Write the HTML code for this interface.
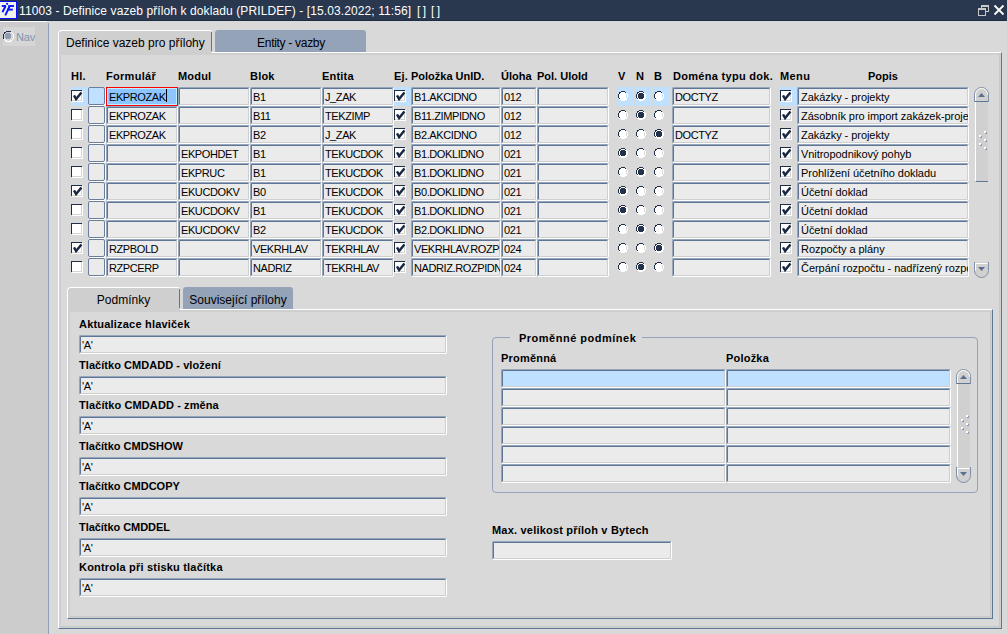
<!DOCTYPE html><html><head><meta charset="utf-8"><style>
*{margin:0;padding:0;box-sizing:border-box}
html,body{width:1007px;height:634px;overflow:hidden;background:#d9d9d9;font-family:"Liberation Sans",sans-serif;color:#000}
.ab{position:absolute}
.t{position:absolute;white-space:nowrap;font-size:11px;line-height:13px}
.b{font-weight:bold;letter-spacing:0.2px}
.f{position:absolute;height:19px;background:#ebebeb;border-radius:2px;border-top:1px solid #95a5ba;border-left:1px solid #95a5ba;border-right:1px solid #fff;border-bottom:1px solid #fff;overflow:hidden;white-space:nowrap;font-size:11px;line-height:13px}
.f::before{content:"";position:absolute;left:0;top:0;right:0;bottom:0;border-top:1px solid #5f7595;border-left:1px solid #5f7595;border-right:1px solid #cfcfcf;border-bottom:1px solid #cfcfcf;border-radius:1px}
.f span{position:absolute;left:3px;top:3px}
.hl{position:absolute;background:#bfe0ff;height:19px}
.cb{position:absolute;width:11px;height:11px;background:#fff;border-top:1px solid #1f2d45;border-left:1px solid #1f2d45;box-shadow:inset -1px -1px 0 #d4d4d4,1px 1px 0 #fff}
.cb svg{left:-1px!important;top:-1px!important}
.cb svg{position:absolute;left:0;top:0}
.rd{position:absolute;width:12px;height:12px}
</style></head><body>
<div class="ab" style="left:0;top:0;width:1007px;height:21px;background:#29384f"></div>
<div class="ab" style="left:0;top:20px;width:1007px;height:1px;background:#1f2c40"></div>
<div class="ab" style="left:0;top:21px;width:47px;height:1px;background:#fff"></div>
<div class="ab" style="left:-1px;top:1px;width:18px;height:18px;background:#f2f2ee;border:1px solid #0a10f0"></div>
<svg class="ab" style="left:0;top:0" width="17" height="20"><g stroke="#0814ff" stroke-width="1.9" fill="none" stroke-linecap="butt"><path d="M1.8 6 H6"/><path d="M5.6 6 L2.4 12.3"/><path d="M8.3 6 H14"/><path d="M7.4 9.6 H12.8"/><path d="M9.7 6 L5.3 15.4"/></g><circle cx="7.1" cy="3.8" r="1.1" fill="#0814ff"/></svg>
<div class="t" style="left:19px;top:4px;font-size:12px;line-height:14px;color:#fff;letter-spacing:0.1px">11003 - Definice vazeb příloh k dokladu (PRILDEF) - [15.03.2022; 11:56]</div>
<div class="t" style="left:417px;top:4px;font-size:12px;line-height:14px;color:#fff;letter-spacing:-0.4px">[ ]</div>
<div class="t" style="left:431px;top:4px;font-size:12px;line-height:14px;color:#fff;letter-spacing:-0.4px">[ ]</div>
<svg class="ab" style="left:976px;top:3px" width="14" height="14"><g fill="none" stroke="#c8c8c8" stroke-width="1"><rect x="5.5" y="2.5" width="7" height="6"/><line x1="5" y1="3" x2="13" y2="3" stroke-width="2"/><rect x="2.5" y="5.5" width="7" height="7" fill="#283850"/><line x1="2" y1="6" x2="10" y2="6" stroke-width="2"/></g></svg>
<svg class="ab" style="left:993px;top:4px" width="12" height="12"><g stroke="#fff" stroke-width="1.8"><line x1="1.5" y1="1.5" x2="10.5" y2="10.5"/><line x1="10.5" y1="1.5" x2="1.5" y2="10.5"/></g></svg>
<div class="ab" style="left:0;top:22px;width:48px;height:612px;background:#cccccc"></div>
<div class="ab" style="left:48px;top:23px;width:1px;height:611px;background:#8e9fb6"></div>
<div class="ab" style="left:3px;top:27px;width:32px;height:19px;background:#d6d6d6"></div>
<div class="t" style="left:16px;top:31px;color:#7f93b3;letter-spacing:-0.2px">Nav</div>
<div class="ab" style="left:58px;top:52px;width:944px;height:577px;border-top:1px solid #fff;border-left:1px solid #fff;border-right:1px solid #5f7595;border-bottom:1px solid #5f7595;background:#cfcfcf"></div>
<div class="ab" style="left:61px;top:55px;width:939px;height:572px;background:#d9d9d9;box-shadow:inset -1px -1px 0 #c8c8c8"></div>
<div class="ab" style="left:58px;top:30px;width:154px;height:25px;background:#cfcfcf;border-top:1px solid #fff;border-left:1px solid #fff;border-top-left-radius:4px;border-top-right-radius:2px"></div>
<div class="ab" style="left:211px;top:32px;width:1px;height:19px;background:#5f7595"></div>
<div class="ab" style="left:59px;top:52px;width:152px;height:3px;background:#cfcfcf"></div>
<div class="t" style="left:66px;top:36px;font-size:12px;line-height:14px">Definice vazeb pro přílohy</div>
<div class="ab" style="left:215px;top:30px;width:151px;height:22px;background:#94a3b8;border-top-left-radius:3px;border-top-right-radius:3px"></div>
<div class="t" style="left:215px;width:152px;text-align:center;top:36px;font-size:12px;line-height:14px;letter-spacing:-0.3px">Entity - vazby</div>
<div class="t b" style="left:71px;top:70px;letter-spacing:0.2px">Hl.</div>
<div class="t b" style="left:106px;top:70px;letter-spacing:0.3px">Formulář</div>
<div class="t b" style="left:178px;top:70px;letter-spacing:0.2px">Modul</div>
<div class="t b" style="left:250px;top:70px;letter-spacing:0.2px">Blok</div>
<div class="t b" style="left:322px;top:70px;letter-spacing:0.2px">Entita</div>
<div class="t b" style="left:394px;top:70px;letter-spacing:0.2px">Ej.</div>
<div class="t b" style="left:411px;top:70px;letter-spacing:0px">Položka UnID.</div>
<div class="t b" style="left:501px;top:70px;letter-spacing:0px">Úloha</div>
<div class="t b" style="left:537px;top:70px;letter-spacing:0px">Pol. UloId</div>
<div class="t b" style="left:618px;top:70px;letter-spacing:0.2px">V</div>
<div class="t b" style="left:636px;top:70px;letter-spacing:0.2px">N</div>
<div class="t b" style="left:654px;top:70px;letter-spacing:0.2px">B</div>
<div class="t b" style="left:673px;top:70px;letter-spacing:0.3px">Doména typu dok.</div>
<div class="t b" style="left:780px;top:70px;letter-spacing:0.4px">Menu</div>
<div class="t b" style="left:868px;top:70px;letter-spacing:0px">Popis</div>
<div class="hl" style="left:71px;top:87px;width:17px"></div>
<div class="hl" style="left:394px;top:87px;width:17px"></div>
<div class="hl" style="left:618px;top:87px;width:16px"></div>
<div class="hl" style="left:636px;top:87px;width:16px"></div>
<div class="hl" style="left:654px;top:87px;width:16px"></div>
<div class="hl" style="left:780px;top:87px;width:17px"></div>
<div class="cb" style="left:71px;top:90px"><svg width="13" height="13"><path d="M3 5.3 L5.1 9 L10.4 2.4" fill="none" stroke="#1a2740" stroke-width="2.4" stroke-linecap="butt" stroke-linejoin="miter"/></svg></div>
<div class="ab" style="left:88px;top:87px;width:17px;height:18px;border:1.5px solid #6a7d9a;border-radius:2px;background:#bfe0ff;box-shadow:1px 1px 0 #fff"></div>
<div class="ab" style="left:106px;top:87px;width:72px;height:19px;border:1px solid #f00;background:#8cc5ff;box-shadow:inset 0 0 0 1px #c4ecff"></div>
<div class="t" style="left:109px;top:91px;letter-spacing:-0.4px">EKPROZAK</div>
<div class="ab" style="left:166px;top:89px;width:1px;height:13px;background:#000"></div>
<div class="f" style="left:178px;top:87px;width:72px;"><span style="left:2px;letter-spacing:-0.05px"></span></div>
<div class="f" style="left:250px;top:87px;width:72px;"><span style="left:2px;letter-spacing:-0.4px">B1</span></div>
<div class="f" style="left:322px;top:87px;width:72px;"><span style="left:2px;letter-spacing:-0.4px">J_ZAK</span></div>
<div class="cb" style="left:394px;top:90px"><svg width="13" height="13"><path d="M3 5.3 L5.1 9 L10.4 2.4" fill="none" stroke="#1a2740" stroke-width="2.4" stroke-linecap="butt" stroke-linejoin="miter"/></svg></div>
<div class="f" style="left:411px;top:87px;width:90px;"><span style="left:2px;letter-spacing:-0.4px">B1.AKCIDNO</span></div>
<div class="f" style="left:501px;top:87px;width:36px;"><span style="left:2px;letter-spacing:-0.4px">012</span></div>
<div class="f" style="left:537px;top:87px;width:72px;"><span style="left:2px;letter-spacing:-0.05px"></span></div>
<svg class="ab" style="left:618px;top:91px" width="10" height="10" shape-rendering="crispEdges"><path d="M3 0h4v1h-4zM1 1h2v1h-2zM7 1h1v1h-1zM1 2h1v1h-1zM0 3h1v1h-1zM0 4h1v1h-1zM0 5h1v1h-1zM0 6h1v1h-1zM1 7h1v1h-1z" fill="#1f2d45"/><path d="M3 1h4v1h-4zM2 2h6v1h-6zM1 3h7v1h-7zM1 4h7v1h-7zM1 5h7v1h-7zM1 6h7v1h-7zM2 7h6v1h-6zM3 8h4v1h-4z" fill="#fff"/><path d="M8 2h1v1h-1zM9 3h1v1h-1zM9 4h1v1h-1zM9 5h1v1h-1zM9 6h1v1h-1zM8 7h1v1h-1zM1 8h2v1h-2zM7 8h2v1h-2zM3 9h4v1h-4z" fill="#fff"/></svg>
<svg class="ab" style="left:636px;top:91px" width="10" height="10" shape-rendering="crispEdges"><path d="M3 0h4v1h-4zM1 1h2v1h-2zM7 1h1v1h-1zM1 2h1v1h-1zM0 3h1v1h-1zM0 4h1v1h-1zM0 5h1v1h-1zM0 6h1v1h-1zM1 7h1v1h-1z" fill="#1f2d45"/><path d="M3 1h4v1h-4zM2 2h1v1h-1zM7 2h1v1h-1zM1 3h1v1h-1zM8 3h1v1h-1zM1 4h1v1h-1zM8 4h1v1h-1zM1 5h1v1h-1zM8 5h1v1h-1zM1 6h1v1h-1zM8 6h1v1h-1zM2 7h1v1h-1zM7 7h1v1h-1zM3 8h4v1h-4z" fill="#fff"/><path d="M3 2h4v1h-4zM2 3h6v1h-6zM2 4h6v1h-6zM2 5h6v1h-6zM2 6h6v1h-6zM3 7h4v1h-4z" fill="#22324a"/><path d="M8 2h1v1h-1zM9 3h1v1h-1zM9 4h1v1h-1zM9 5h1v1h-1zM9 6h1v1h-1zM8 7h1v1h-1zM1 8h2v1h-2zM7 8h2v1h-2zM3 9h4v1h-4z" fill="#fff"/></svg>
<svg class="ab" style="left:654px;top:91px" width="10" height="10" shape-rendering="crispEdges"><path d="M3 0h4v1h-4zM1 1h2v1h-2zM7 1h1v1h-1zM1 2h1v1h-1zM0 3h1v1h-1zM0 4h1v1h-1zM0 5h1v1h-1zM0 6h1v1h-1zM1 7h1v1h-1z" fill="#1f2d45"/><path d="M3 1h4v1h-4zM2 2h6v1h-6zM1 3h7v1h-7zM1 4h7v1h-7zM1 5h7v1h-7zM1 6h7v1h-7zM2 7h6v1h-6zM3 8h4v1h-4z" fill="#fff"/><path d="M8 2h1v1h-1zM9 3h1v1h-1zM9 4h1v1h-1zM9 5h1v1h-1zM9 6h1v1h-1zM8 7h1v1h-1zM1 8h2v1h-2zM7 8h2v1h-2zM3 9h4v1h-4z" fill="#fff"/></svg>
<div class="f" style="left:672px;top:87px;width:99px;"><span style="left:2px;letter-spacing:-0.4px">DOCTYZ</span></div>
<div class="cb" style="left:780px;top:90px"><svg width="13" height="13"><path d="M3 5.3 L5.1 9 L10.4 2.4" fill="none" stroke="#1a2740" stroke-width="2.4" stroke-linecap="butt" stroke-linejoin="miter"/></svg></div>
<div class="f" style="left:797px;top:87px;width:172px;"><span style="left:3px;letter-spacing:-0.05px">Zakázky - projekty</span></div>
<div class="cb" style="left:71px;top:109px"></div>
<div class="ab" style="left:88px;top:106px;width:17px;height:18px;border:1.5px solid #6a7d9a;border-radius:2px;background:#ebebeb;box-shadow:1px 1px 0 #fff"></div>
<div class="f" style="left:106px;top:106px;width:72px;"><span style="left:2px;letter-spacing:-0.4px">EKPROZAK</span></div>
<div class="f" style="left:178px;top:106px;width:72px;"><span style="left:2px;letter-spacing:-0.05px"></span></div>
<div class="f" style="left:250px;top:106px;width:72px;"><span style="left:2px;letter-spacing:-0.4px">B11</span></div>
<div class="f" style="left:322px;top:106px;width:72px;"><span style="left:2px;letter-spacing:-0.4px">TEKZIMP</span></div>
<div class="cb" style="left:394px;top:109px"><svg width="13" height="13"><path d="M3 5.3 L5.1 9 L10.4 2.4" fill="none" stroke="#1a2740" stroke-width="2.4" stroke-linecap="butt" stroke-linejoin="miter"/></svg></div>
<div class="f" style="left:411px;top:106px;width:90px;"><span style="left:2px;letter-spacing:-0.4px">B11.ZIMPIDNO</span></div>
<div class="f" style="left:501px;top:106px;width:36px;"><span style="left:2px;letter-spacing:-0.4px">012</span></div>
<div class="f" style="left:537px;top:106px;width:72px;"><span style="left:2px;letter-spacing:-0.05px"></span></div>
<svg class="ab" style="left:618px;top:110px" width="10" height="10" shape-rendering="crispEdges"><path d="M3 0h4v1h-4zM1 1h2v1h-2zM7 1h1v1h-1zM1 2h1v1h-1zM0 3h1v1h-1zM0 4h1v1h-1zM0 5h1v1h-1zM0 6h1v1h-1zM1 7h1v1h-1z" fill="#1f2d45"/><path d="M3 1h4v1h-4zM2 2h6v1h-6zM1 3h7v1h-7zM1 4h7v1h-7zM1 5h7v1h-7zM1 6h7v1h-7zM2 7h6v1h-6zM3 8h4v1h-4z" fill="#fff"/><path d="M8 2h1v1h-1zM9 3h1v1h-1zM9 4h1v1h-1zM9 5h1v1h-1zM9 6h1v1h-1zM8 7h1v1h-1zM1 8h2v1h-2zM7 8h2v1h-2zM3 9h4v1h-4z" fill="#fff"/></svg>
<svg class="ab" style="left:636px;top:110px" width="10" height="10" shape-rendering="crispEdges"><path d="M3 0h4v1h-4zM1 1h2v1h-2zM7 1h1v1h-1zM1 2h1v1h-1zM0 3h1v1h-1zM0 4h1v1h-1zM0 5h1v1h-1zM0 6h1v1h-1zM1 7h1v1h-1z" fill="#1f2d45"/><path d="M3 1h4v1h-4zM2 2h1v1h-1zM7 2h1v1h-1zM1 3h1v1h-1zM8 3h1v1h-1zM1 4h1v1h-1zM8 4h1v1h-1zM1 5h1v1h-1zM8 5h1v1h-1zM1 6h1v1h-1zM8 6h1v1h-1zM2 7h1v1h-1zM7 7h1v1h-1zM3 8h4v1h-4z" fill="#fff"/><path d="M3 2h4v1h-4zM2 3h6v1h-6zM2 4h6v1h-6zM2 5h6v1h-6zM2 6h6v1h-6zM3 7h4v1h-4z" fill="#22324a"/><path d="M8 2h1v1h-1zM9 3h1v1h-1zM9 4h1v1h-1zM9 5h1v1h-1zM9 6h1v1h-1zM8 7h1v1h-1zM1 8h2v1h-2zM7 8h2v1h-2zM3 9h4v1h-4z" fill="#fff"/></svg>
<svg class="ab" style="left:654px;top:110px" width="10" height="10" shape-rendering="crispEdges"><path d="M3 0h4v1h-4zM1 1h2v1h-2zM7 1h1v1h-1zM1 2h1v1h-1zM0 3h1v1h-1zM0 4h1v1h-1zM0 5h1v1h-1zM0 6h1v1h-1zM1 7h1v1h-1z" fill="#1f2d45"/><path d="M3 1h4v1h-4zM2 2h6v1h-6zM1 3h7v1h-7zM1 4h7v1h-7zM1 5h7v1h-7zM1 6h7v1h-7zM2 7h6v1h-6zM3 8h4v1h-4z" fill="#fff"/><path d="M8 2h1v1h-1zM9 3h1v1h-1zM9 4h1v1h-1zM9 5h1v1h-1zM9 6h1v1h-1zM8 7h1v1h-1zM1 8h2v1h-2zM7 8h2v1h-2zM3 9h4v1h-4z" fill="#fff"/></svg>
<div class="f" style="left:672px;top:106px;width:99px;"><span style="left:2px;letter-spacing:-0.05px"></span></div>
<div class="cb" style="left:780px;top:109px"><svg width="13" height="13"><path d="M3 5.3 L5.1 9 L10.4 2.4" fill="none" stroke="#1a2740" stroke-width="2.4" stroke-linecap="butt" stroke-linejoin="miter"/></svg></div>
<div class="f" style="left:797px;top:106px;width:172px;"><span style="left:3px;letter-spacing:-0.05px">Zásobník pro import zakázek-projekty</span></div>
<div class="cb" style="left:71px;top:128px"></div>
<div class="ab" style="left:88px;top:125px;width:17px;height:18px;border:1.5px solid #6a7d9a;border-radius:2px;background:#ebebeb;box-shadow:1px 1px 0 #fff"></div>
<div class="f" style="left:106px;top:125px;width:72px;"><span style="left:2px;letter-spacing:-0.4px">EKPROZAK</span></div>
<div class="f" style="left:178px;top:125px;width:72px;"><span style="left:2px;letter-spacing:-0.05px"></span></div>
<div class="f" style="left:250px;top:125px;width:72px;"><span style="left:2px;letter-spacing:-0.4px">B2</span></div>
<div class="f" style="left:322px;top:125px;width:72px;"><span style="left:2px;letter-spacing:-0.4px">J_ZAK</span></div>
<div class="cb" style="left:394px;top:128px"><svg width="13" height="13"><path d="M3 5.3 L5.1 9 L10.4 2.4" fill="none" stroke="#1a2740" stroke-width="2.4" stroke-linecap="butt" stroke-linejoin="miter"/></svg></div>
<div class="f" style="left:411px;top:125px;width:90px;"><span style="left:2px;letter-spacing:-0.4px">B2.AKCIDNO</span></div>
<div class="f" style="left:501px;top:125px;width:36px;"><span style="left:2px;letter-spacing:-0.4px">012</span></div>
<div class="f" style="left:537px;top:125px;width:72px;"><span style="left:2px;letter-spacing:-0.05px"></span></div>
<svg class="ab" style="left:618px;top:129px" width="10" height="10" shape-rendering="crispEdges"><path d="M3 0h4v1h-4zM1 1h2v1h-2zM7 1h1v1h-1zM1 2h1v1h-1zM0 3h1v1h-1zM0 4h1v1h-1zM0 5h1v1h-1zM0 6h1v1h-1zM1 7h1v1h-1z" fill="#1f2d45"/><path d="M3 1h4v1h-4zM2 2h6v1h-6zM1 3h7v1h-7zM1 4h7v1h-7zM1 5h7v1h-7zM1 6h7v1h-7zM2 7h6v1h-6zM3 8h4v1h-4z" fill="#fff"/><path d="M8 2h1v1h-1zM9 3h1v1h-1zM9 4h1v1h-1zM9 5h1v1h-1zM9 6h1v1h-1zM8 7h1v1h-1zM1 8h2v1h-2zM7 8h2v1h-2zM3 9h4v1h-4z" fill="#fff"/></svg>
<svg class="ab" style="left:636px;top:129px" width="10" height="10" shape-rendering="crispEdges"><path d="M3 0h4v1h-4zM1 1h2v1h-2zM7 1h1v1h-1zM1 2h1v1h-1zM0 3h1v1h-1zM0 4h1v1h-1zM0 5h1v1h-1zM0 6h1v1h-1zM1 7h1v1h-1z" fill="#1f2d45"/><path d="M3 1h4v1h-4zM2 2h6v1h-6zM1 3h7v1h-7zM1 4h7v1h-7zM1 5h7v1h-7zM1 6h7v1h-7zM2 7h6v1h-6zM3 8h4v1h-4z" fill="#fff"/><path d="M8 2h1v1h-1zM9 3h1v1h-1zM9 4h1v1h-1zM9 5h1v1h-1zM9 6h1v1h-1zM8 7h1v1h-1zM1 8h2v1h-2zM7 8h2v1h-2zM3 9h4v1h-4z" fill="#fff"/></svg>
<svg class="ab" style="left:654px;top:129px" width="10" height="10" shape-rendering="crispEdges"><path d="M3 0h4v1h-4zM1 1h2v1h-2zM7 1h1v1h-1zM1 2h1v1h-1zM0 3h1v1h-1zM0 4h1v1h-1zM0 5h1v1h-1zM0 6h1v1h-1zM1 7h1v1h-1z" fill="#1f2d45"/><path d="M3 1h4v1h-4zM2 2h1v1h-1zM7 2h1v1h-1zM1 3h1v1h-1zM8 3h1v1h-1zM1 4h1v1h-1zM8 4h1v1h-1zM1 5h1v1h-1zM8 5h1v1h-1zM1 6h1v1h-1zM8 6h1v1h-1zM2 7h1v1h-1zM7 7h1v1h-1zM3 8h4v1h-4z" fill="#fff"/><path d="M3 2h4v1h-4zM2 3h6v1h-6zM2 4h6v1h-6zM2 5h6v1h-6zM2 6h6v1h-6zM3 7h4v1h-4z" fill="#22324a"/><path d="M8 2h1v1h-1zM9 3h1v1h-1zM9 4h1v1h-1zM9 5h1v1h-1zM9 6h1v1h-1zM8 7h1v1h-1zM1 8h2v1h-2zM7 8h2v1h-2zM3 9h4v1h-4z" fill="#fff"/></svg>
<div class="f" style="left:672px;top:125px;width:99px;"><span style="left:2px;letter-spacing:-0.4px">DOCTYZ</span></div>
<div class="cb" style="left:780px;top:128px"><svg width="13" height="13"><path d="M3 5.3 L5.1 9 L10.4 2.4" fill="none" stroke="#1a2740" stroke-width="2.4" stroke-linecap="butt" stroke-linejoin="miter"/></svg></div>
<div class="f" style="left:797px;top:125px;width:172px;"><span style="left:3px;letter-spacing:-0.05px">Zakázky - projekty</span></div>
<div class="cb" style="left:71px;top:147px"></div>
<div class="ab" style="left:88px;top:144px;width:17px;height:18px;border:1.5px solid #6a7d9a;border-radius:2px;background:#ebebeb;box-shadow:1px 1px 0 #fff"></div>
<div class="f" style="left:106px;top:144px;width:72px;"><span style="left:2px;letter-spacing:-0.05px"></span></div>
<div class="f" style="left:178px;top:144px;width:72px;"><span style="left:2px;letter-spacing:-0.4px">EKPOHDET</span></div>
<div class="f" style="left:250px;top:144px;width:72px;"><span style="left:2px;letter-spacing:-0.4px">B1</span></div>
<div class="f" style="left:322px;top:144px;width:72px;"><span style="left:2px;letter-spacing:-0.4px">TEKUCDOK</span></div>
<div class="cb" style="left:394px;top:147px"><svg width="13" height="13"><path d="M3 5.3 L5.1 9 L10.4 2.4" fill="none" stroke="#1a2740" stroke-width="2.4" stroke-linecap="butt" stroke-linejoin="miter"/></svg></div>
<div class="f" style="left:411px;top:144px;width:90px;"><span style="left:2px;letter-spacing:-0.4px">B1.DOKLIDNO</span></div>
<div class="f" style="left:501px;top:144px;width:36px;"><span style="left:2px;letter-spacing:-0.4px">021</span></div>
<div class="f" style="left:537px;top:144px;width:72px;"><span style="left:2px;letter-spacing:-0.05px"></span></div>
<svg class="ab" style="left:618px;top:148px" width="10" height="10" shape-rendering="crispEdges"><path d="M3 0h4v1h-4zM1 1h2v1h-2zM7 1h1v1h-1zM1 2h1v1h-1zM0 3h1v1h-1zM0 4h1v1h-1zM0 5h1v1h-1zM0 6h1v1h-1zM1 7h1v1h-1z" fill="#1f2d45"/><path d="M3 1h4v1h-4zM2 2h1v1h-1zM7 2h1v1h-1zM1 3h1v1h-1zM8 3h1v1h-1zM1 4h1v1h-1zM8 4h1v1h-1zM1 5h1v1h-1zM8 5h1v1h-1zM1 6h1v1h-1zM8 6h1v1h-1zM2 7h1v1h-1zM7 7h1v1h-1zM3 8h4v1h-4z" fill="#fff"/><path d="M3 2h4v1h-4zM2 3h6v1h-6zM2 4h6v1h-6zM2 5h6v1h-6zM2 6h6v1h-6zM3 7h4v1h-4z" fill="#22324a"/><path d="M8 2h1v1h-1zM9 3h1v1h-1zM9 4h1v1h-1zM9 5h1v1h-1zM9 6h1v1h-1zM8 7h1v1h-1zM1 8h2v1h-2zM7 8h2v1h-2zM3 9h4v1h-4z" fill="#fff"/></svg>
<svg class="ab" style="left:636px;top:148px" width="10" height="10" shape-rendering="crispEdges"><path d="M3 0h4v1h-4zM1 1h2v1h-2zM7 1h1v1h-1zM1 2h1v1h-1zM0 3h1v1h-1zM0 4h1v1h-1zM0 5h1v1h-1zM0 6h1v1h-1zM1 7h1v1h-1z" fill="#1f2d45"/><path d="M3 1h4v1h-4zM2 2h6v1h-6zM1 3h7v1h-7zM1 4h7v1h-7zM1 5h7v1h-7zM1 6h7v1h-7zM2 7h6v1h-6zM3 8h4v1h-4z" fill="#fff"/><path d="M8 2h1v1h-1zM9 3h1v1h-1zM9 4h1v1h-1zM9 5h1v1h-1zM9 6h1v1h-1zM8 7h1v1h-1zM1 8h2v1h-2zM7 8h2v1h-2zM3 9h4v1h-4z" fill="#fff"/></svg>
<svg class="ab" style="left:654px;top:148px" width="10" height="10" shape-rendering="crispEdges"><path d="M3 0h4v1h-4zM1 1h2v1h-2zM7 1h1v1h-1zM1 2h1v1h-1zM0 3h1v1h-1zM0 4h1v1h-1zM0 5h1v1h-1zM0 6h1v1h-1zM1 7h1v1h-1z" fill="#1f2d45"/><path d="M3 1h4v1h-4zM2 2h6v1h-6zM1 3h7v1h-7zM1 4h7v1h-7zM1 5h7v1h-7zM1 6h7v1h-7zM2 7h6v1h-6zM3 8h4v1h-4z" fill="#fff"/><path d="M8 2h1v1h-1zM9 3h1v1h-1zM9 4h1v1h-1zM9 5h1v1h-1zM9 6h1v1h-1zM8 7h1v1h-1zM1 8h2v1h-2zM7 8h2v1h-2zM3 9h4v1h-4z" fill="#fff"/></svg>
<div class="f" style="left:672px;top:144px;width:99px;"><span style="left:2px;letter-spacing:-0.05px"></span></div>
<div class="cb" style="left:780px;top:147px"><svg width="13" height="13"><path d="M3 5.3 L5.1 9 L10.4 2.4" fill="none" stroke="#1a2740" stroke-width="2.4" stroke-linecap="butt" stroke-linejoin="miter"/></svg></div>
<div class="f" style="left:797px;top:144px;width:172px;"><span style="left:3px;letter-spacing:-0.05px">Vnitropodnikový pohyb</span></div>
<div class="cb" style="left:71px;top:166px"></div>
<div class="ab" style="left:88px;top:163px;width:17px;height:18px;border:1.5px solid #6a7d9a;border-radius:2px;background:#ebebeb;box-shadow:1px 1px 0 #fff"></div>
<div class="f" style="left:106px;top:163px;width:72px;"><span style="left:2px;letter-spacing:-0.05px"></span></div>
<div class="f" style="left:178px;top:163px;width:72px;"><span style="left:2px;letter-spacing:-0.4px">EKPRUC</span></div>
<div class="f" style="left:250px;top:163px;width:72px;"><span style="left:2px;letter-spacing:-0.4px">B1</span></div>
<div class="f" style="left:322px;top:163px;width:72px;"><span style="left:2px;letter-spacing:-0.4px">TEKUCDOK</span></div>
<div class="cb" style="left:394px;top:166px"><svg width="13" height="13"><path d="M3 5.3 L5.1 9 L10.4 2.4" fill="none" stroke="#1a2740" stroke-width="2.4" stroke-linecap="butt" stroke-linejoin="miter"/></svg></div>
<div class="f" style="left:411px;top:163px;width:90px;"><span style="left:2px;letter-spacing:-0.4px">B1.DOKLIDNO</span></div>
<div class="f" style="left:501px;top:163px;width:36px;"><span style="left:2px;letter-spacing:-0.4px">021</span></div>
<div class="f" style="left:537px;top:163px;width:72px;"><span style="left:2px;letter-spacing:-0.05px"></span></div>
<svg class="ab" style="left:618px;top:167px" width="10" height="10" shape-rendering="crispEdges"><path d="M3 0h4v1h-4zM1 1h2v1h-2zM7 1h1v1h-1zM1 2h1v1h-1zM0 3h1v1h-1zM0 4h1v1h-1zM0 5h1v1h-1zM0 6h1v1h-1zM1 7h1v1h-1z" fill="#1f2d45"/><path d="M3 1h4v1h-4zM2 2h6v1h-6zM1 3h7v1h-7zM1 4h7v1h-7zM1 5h7v1h-7zM1 6h7v1h-7zM2 7h6v1h-6zM3 8h4v1h-4z" fill="#fff"/><path d="M8 2h1v1h-1zM9 3h1v1h-1zM9 4h1v1h-1zM9 5h1v1h-1zM9 6h1v1h-1zM8 7h1v1h-1zM1 8h2v1h-2zM7 8h2v1h-2zM3 9h4v1h-4z" fill="#fff"/></svg>
<svg class="ab" style="left:636px;top:167px" width="10" height="10" shape-rendering="crispEdges"><path d="M3 0h4v1h-4zM1 1h2v1h-2zM7 1h1v1h-1zM1 2h1v1h-1zM0 3h1v1h-1zM0 4h1v1h-1zM0 5h1v1h-1zM0 6h1v1h-1zM1 7h1v1h-1z" fill="#1f2d45"/><path d="M3 1h4v1h-4zM2 2h1v1h-1zM7 2h1v1h-1zM1 3h1v1h-1zM8 3h1v1h-1zM1 4h1v1h-1zM8 4h1v1h-1zM1 5h1v1h-1zM8 5h1v1h-1zM1 6h1v1h-1zM8 6h1v1h-1zM2 7h1v1h-1zM7 7h1v1h-1zM3 8h4v1h-4z" fill="#fff"/><path d="M3 2h4v1h-4zM2 3h6v1h-6zM2 4h6v1h-6zM2 5h6v1h-6zM2 6h6v1h-6zM3 7h4v1h-4z" fill="#22324a"/><path d="M8 2h1v1h-1zM9 3h1v1h-1zM9 4h1v1h-1zM9 5h1v1h-1zM9 6h1v1h-1zM8 7h1v1h-1zM1 8h2v1h-2zM7 8h2v1h-2zM3 9h4v1h-4z" fill="#fff"/></svg>
<svg class="ab" style="left:654px;top:167px" width="10" height="10" shape-rendering="crispEdges"><path d="M3 0h4v1h-4zM1 1h2v1h-2zM7 1h1v1h-1zM1 2h1v1h-1zM0 3h1v1h-1zM0 4h1v1h-1zM0 5h1v1h-1zM0 6h1v1h-1zM1 7h1v1h-1z" fill="#1f2d45"/><path d="M3 1h4v1h-4zM2 2h6v1h-6zM1 3h7v1h-7zM1 4h7v1h-7zM1 5h7v1h-7zM1 6h7v1h-7zM2 7h6v1h-6zM3 8h4v1h-4z" fill="#fff"/><path d="M8 2h1v1h-1zM9 3h1v1h-1zM9 4h1v1h-1zM9 5h1v1h-1zM9 6h1v1h-1zM8 7h1v1h-1zM1 8h2v1h-2zM7 8h2v1h-2zM3 9h4v1h-4z" fill="#fff"/></svg>
<div class="f" style="left:672px;top:163px;width:99px;"><span style="left:2px;letter-spacing:-0.05px"></span></div>
<div class="cb" style="left:780px;top:166px"><svg width="13" height="13"><path d="M3 5.3 L5.1 9 L10.4 2.4" fill="none" stroke="#1a2740" stroke-width="2.4" stroke-linecap="butt" stroke-linejoin="miter"/></svg></div>
<div class="f" style="left:797px;top:163px;width:172px;"><span style="left:3px;letter-spacing:-0.05px">Prohlížení účetního dokladu</span></div>
<div class="cb" style="left:71px;top:185px"><svg width="13" height="13"><path d="M3 5.3 L5.1 9 L10.4 2.4" fill="none" stroke="#1a2740" stroke-width="2.4" stroke-linecap="butt" stroke-linejoin="miter"/></svg></div>
<div class="ab" style="left:88px;top:182px;width:17px;height:18px;border:1.5px solid #6a7d9a;border-radius:2px;background:#ebebeb;box-shadow:1px 1px 0 #fff"></div>
<div class="f" style="left:106px;top:182px;width:72px;"><span style="left:2px;letter-spacing:-0.05px"></span></div>
<div class="f" style="left:178px;top:182px;width:72px;"><span style="left:2px;letter-spacing:-0.4px">EKUCDOKV</span></div>
<div class="f" style="left:250px;top:182px;width:72px;"><span style="left:2px;letter-spacing:-0.4px">B0</span></div>
<div class="f" style="left:322px;top:182px;width:72px;"><span style="left:2px;letter-spacing:-0.4px">TEKUCDOK</span></div>
<div class="cb" style="left:394px;top:185px"><svg width="13" height="13"><path d="M3 5.3 L5.1 9 L10.4 2.4" fill="none" stroke="#1a2740" stroke-width="2.4" stroke-linecap="butt" stroke-linejoin="miter"/></svg></div>
<div class="f" style="left:411px;top:182px;width:90px;"><span style="left:2px;letter-spacing:-0.4px">B0.DOKLIDNO</span></div>
<div class="f" style="left:501px;top:182px;width:36px;"><span style="left:2px;letter-spacing:-0.4px">021</span></div>
<div class="f" style="left:537px;top:182px;width:72px;"><span style="left:2px;letter-spacing:-0.05px"></span></div>
<svg class="ab" style="left:618px;top:186px" width="10" height="10" shape-rendering="crispEdges"><path d="M3 0h4v1h-4zM1 1h2v1h-2zM7 1h1v1h-1zM1 2h1v1h-1zM0 3h1v1h-1zM0 4h1v1h-1zM0 5h1v1h-1zM0 6h1v1h-1zM1 7h1v1h-1z" fill="#1f2d45"/><path d="M3 1h4v1h-4zM2 2h1v1h-1zM7 2h1v1h-1zM1 3h1v1h-1zM8 3h1v1h-1zM1 4h1v1h-1zM8 4h1v1h-1zM1 5h1v1h-1zM8 5h1v1h-1zM1 6h1v1h-1zM8 6h1v1h-1zM2 7h1v1h-1zM7 7h1v1h-1zM3 8h4v1h-4z" fill="#fff"/><path d="M3 2h4v1h-4zM2 3h6v1h-6zM2 4h6v1h-6zM2 5h6v1h-6zM2 6h6v1h-6zM3 7h4v1h-4z" fill="#22324a"/><path d="M8 2h1v1h-1zM9 3h1v1h-1zM9 4h1v1h-1zM9 5h1v1h-1zM9 6h1v1h-1zM8 7h1v1h-1zM1 8h2v1h-2zM7 8h2v1h-2zM3 9h4v1h-4z" fill="#fff"/></svg>
<svg class="ab" style="left:636px;top:186px" width="10" height="10" shape-rendering="crispEdges"><path d="M3 0h4v1h-4zM1 1h2v1h-2zM7 1h1v1h-1zM1 2h1v1h-1zM0 3h1v1h-1zM0 4h1v1h-1zM0 5h1v1h-1zM0 6h1v1h-1zM1 7h1v1h-1z" fill="#1f2d45"/><path d="M3 1h4v1h-4zM2 2h6v1h-6zM1 3h7v1h-7zM1 4h7v1h-7zM1 5h7v1h-7zM1 6h7v1h-7zM2 7h6v1h-6zM3 8h4v1h-4z" fill="#fff"/><path d="M8 2h1v1h-1zM9 3h1v1h-1zM9 4h1v1h-1zM9 5h1v1h-1zM9 6h1v1h-1zM8 7h1v1h-1zM1 8h2v1h-2zM7 8h2v1h-2zM3 9h4v1h-4z" fill="#fff"/></svg>
<svg class="ab" style="left:654px;top:186px" width="10" height="10" shape-rendering="crispEdges"><path d="M3 0h4v1h-4zM1 1h2v1h-2zM7 1h1v1h-1zM1 2h1v1h-1zM0 3h1v1h-1zM0 4h1v1h-1zM0 5h1v1h-1zM0 6h1v1h-1zM1 7h1v1h-1z" fill="#1f2d45"/><path d="M3 1h4v1h-4zM2 2h6v1h-6zM1 3h7v1h-7zM1 4h7v1h-7zM1 5h7v1h-7zM1 6h7v1h-7zM2 7h6v1h-6zM3 8h4v1h-4z" fill="#fff"/><path d="M8 2h1v1h-1zM9 3h1v1h-1zM9 4h1v1h-1zM9 5h1v1h-1zM9 6h1v1h-1zM8 7h1v1h-1zM1 8h2v1h-2zM7 8h2v1h-2zM3 9h4v1h-4z" fill="#fff"/></svg>
<div class="f" style="left:672px;top:182px;width:99px;"><span style="left:2px;letter-spacing:-0.05px"></span></div>
<div class="cb" style="left:780px;top:185px"><svg width="13" height="13"><path d="M3 5.3 L5.1 9 L10.4 2.4" fill="none" stroke="#1a2740" stroke-width="2.4" stroke-linecap="butt" stroke-linejoin="miter"/></svg></div>
<div class="f" style="left:797px;top:182px;width:172px;"><span style="left:3px;letter-spacing:-0.05px">Účetní doklad</span></div>
<div class="cb" style="left:71px;top:204px"></div>
<div class="ab" style="left:88px;top:201px;width:17px;height:18px;border:1.5px solid #6a7d9a;border-radius:2px;background:#ebebeb;box-shadow:1px 1px 0 #fff"></div>
<div class="f" style="left:106px;top:201px;width:72px;"><span style="left:2px;letter-spacing:-0.05px"></span></div>
<div class="f" style="left:178px;top:201px;width:72px;"><span style="left:2px;letter-spacing:-0.4px">EKUCDOKV</span></div>
<div class="f" style="left:250px;top:201px;width:72px;"><span style="left:2px;letter-spacing:-0.4px">B1</span></div>
<div class="f" style="left:322px;top:201px;width:72px;"><span style="left:2px;letter-spacing:-0.4px">TEKUCDOK</span></div>
<div class="cb" style="left:394px;top:204px"><svg width="13" height="13"><path d="M3 5.3 L5.1 9 L10.4 2.4" fill="none" stroke="#1a2740" stroke-width="2.4" stroke-linecap="butt" stroke-linejoin="miter"/></svg></div>
<div class="f" style="left:411px;top:201px;width:90px;"><span style="left:2px;letter-spacing:-0.4px">B1.DOKLIDNO</span></div>
<div class="f" style="left:501px;top:201px;width:36px;"><span style="left:2px;letter-spacing:-0.4px">021</span></div>
<div class="f" style="left:537px;top:201px;width:72px;"><span style="left:2px;letter-spacing:-0.05px"></span></div>
<svg class="ab" style="left:618px;top:205px" width="10" height="10" shape-rendering="crispEdges"><path d="M3 0h4v1h-4zM1 1h2v1h-2zM7 1h1v1h-1zM1 2h1v1h-1zM0 3h1v1h-1zM0 4h1v1h-1zM0 5h1v1h-1zM0 6h1v1h-1zM1 7h1v1h-1z" fill="#1f2d45"/><path d="M3 1h4v1h-4zM2 2h1v1h-1zM7 2h1v1h-1zM1 3h1v1h-1zM8 3h1v1h-1zM1 4h1v1h-1zM8 4h1v1h-1zM1 5h1v1h-1zM8 5h1v1h-1zM1 6h1v1h-1zM8 6h1v1h-1zM2 7h1v1h-1zM7 7h1v1h-1zM3 8h4v1h-4z" fill="#fff"/><path d="M3 2h4v1h-4zM2 3h6v1h-6zM2 4h6v1h-6zM2 5h6v1h-6zM2 6h6v1h-6zM3 7h4v1h-4z" fill="#22324a"/><path d="M8 2h1v1h-1zM9 3h1v1h-1zM9 4h1v1h-1zM9 5h1v1h-1zM9 6h1v1h-1zM8 7h1v1h-1zM1 8h2v1h-2zM7 8h2v1h-2zM3 9h4v1h-4z" fill="#fff"/></svg>
<svg class="ab" style="left:636px;top:205px" width="10" height="10" shape-rendering="crispEdges"><path d="M3 0h4v1h-4zM1 1h2v1h-2zM7 1h1v1h-1zM1 2h1v1h-1zM0 3h1v1h-1zM0 4h1v1h-1zM0 5h1v1h-1zM0 6h1v1h-1zM1 7h1v1h-1z" fill="#1f2d45"/><path d="M3 1h4v1h-4zM2 2h6v1h-6zM1 3h7v1h-7zM1 4h7v1h-7zM1 5h7v1h-7zM1 6h7v1h-7zM2 7h6v1h-6zM3 8h4v1h-4z" fill="#fff"/><path d="M8 2h1v1h-1zM9 3h1v1h-1zM9 4h1v1h-1zM9 5h1v1h-1zM9 6h1v1h-1zM8 7h1v1h-1zM1 8h2v1h-2zM7 8h2v1h-2zM3 9h4v1h-4z" fill="#fff"/></svg>
<svg class="ab" style="left:654px;top:205px" width="10" height="10" shape-rendering="crispEdges"><path d="M3 0h4v1h-4zM1 1h2v1h-2zM7 1h1v1h-1zM1 2h1v1h-1zM0 3h1v1h-1zM0 4h1v1h-1zM0 5h1v1h-1zM0 6h1v1h-1zM1 7h1v1h-1z" fill="#1f2d45"/><path d="M3 1h4v1h-4zM2 2h6v1h-6zM1 3h7v1h-7zM1 4h7v1h-7zM1 5h7v1h-7zM1 6h7v1h-7zM2 7h6v1h-6zM3 8h4v1h-4z" fill="#fff"/><path d="M8 2h1v1h-1zM9 3h1v1h-1zM9 4h1v1h-1zM9 5h1v1h-1zM9 6h1v1h-1zM8 7h1v1h-1zM1 8h2v1h-2zM7 8h2v1h-2zM3 9h4v1h-4z" fill="#fff"/></svg>
<div class="f" style="left:672px;top:201px;width:99px;"><span style="left:2px;letter-spacing:-0.05px"></span></div>
<div class="cb" style="left:780px;top:204px"><svg width="13" height="13"><path d="M3 5.3 L5.1 9 L10.4 2.4" fill="none" stroke="#1a2740" stroke-width="2.4" stroke-linecap="butt" stroke-linejoin="miter"/></svg></div>
<div class="f" style="left:797px;top:201px;width:172px;"><span style="left:3px;letter-spacing:-0.05px">Účetní doklad</span></div>
<div class="cb" style="left:71px;top:223px"></div>
<div class="ab" style="left:88px;top:220px;width:17px;height:18px;border:1.5px solid #6a7d9a;border-radius:2px;background:#ebebeb;box-shadow:1px 1px 0 #fff"></div>
<div class="f" style="left:106px;top:220px;width:72px;"><span style="left:2px;letter-spacing:-0.05px"></span></div>
<div class="f" style="left:178px;top:220px;width:72px;"><span style="left:2px;letter-spacing:-0.4px">EKUCDOKV</span></div>
<div class="f" style="left:250px;top:220px;width:72px;"><span style="left:2px;letter-spacing:-0.4px">B2</span></div>
<div class="f" style="left:322px;top:220px;width:72px;"><span style="left:2px;letter-spacing:-0.4px">TEKUCDOK</span></div>
<div class="cb" style="left:394px;top:223px"><svg width="13" height="13"><path d="M3 5.3 L5.1 9 L10.4 2.4" fill="none" stroke="#1a2740" stroke-width="2.4" stroke-linecap="butt" stroke-linejoin="miter"/></svg></div>
<div class="f" style="left:411px;top:220px;width:90px;"><span style="left:2px;letter-spacing:-0.4px">B2.DOKLIDNO</span></div>
<div class="f" style="left:501px;top:220px;width:36px;"><span style="left:2px;letter-spacing:-0.4px">021</span></div>
<div class="f" style="left:537px;top:220px;width:72px;"><span style="left:2px;letter-spacing:-0.05px"></span></div>
<svg class="ab" style="left:618px;top:224px" width="10" height="10" shape-rendering="crispEdges"><path d="M3 0h4v1h-4zM1 1h2v1h-2zM7 1h1v1h-1zM1 2h1v1h-1zM0 3h1v1h-1zM0 4h1v1h-1zM0 5h1v1h-1zM0 6h1v1h-1zM1 7h1v1h-1z" fill="#1f2d45"/><path d="M3 1h4v1h-4zM2 2h6v1h-6zM1 3h7v1h-7zM1 4h7v1h-7zM1 5h7v1h-7zM1 6h7v1h-7zM2 7h6v1h-6zM3 8h4v1h-4z" fill="#fff"/><path d="M8 2h1v1h-1zM9 3h1v1h-1zM9 4h1v1h-1zM9 5h1v1h-1zM9 6h1v1h-1zM8 7h1v1h-1zM1 8h2v1h-2zM7 8h2v1h-2zM3 9h4v1h-4z" fill="#fff"/></svg>
<svg class="ab" style="left:636px;top:224px" width="10" height="10" shape-rendering="crispEdges"><path d="M3 0h4v1h-4zM1 1h2v1h-2zM7 1h1v1h-1zM1 2h1v1h-1zM0 3h1v1h-1zM0 4h1v1h-1zM0 5h1v1h-1zM0 6h1v1h-1zM1 7h1v1h-1z" fill="#1f2d45"/><path d="M3 1h4v1h-4zM2 2h1v1h-1zM7 2h1v1h-1zM1 3h1v1h-1zM8 3h1v1h-1zM1 4h1v1h-1zM8 4h1v1h-1zM1 5h1v1h-1zM8 5h1v1h-1zM1 6h1v1h-1zM8 6h1v1h-1zM2 7h1v1h-1zM7 7h1v1h-1zM3 8h4v1h-4z" fill="#fff"/><path d="M3 2h4v1h-4zM2 3h6v1h-6zM2 4h6v1h-6zM2 5h6v1h-6zM2 6h6v1h-6zM3 7h4v1h-4z" fill="#22324a"/><path d="M8 2h1v1h-1zM9 3h1v1h-1zM9 4h1v1h-1zM9 5h1v1h-1zM9 6h1v1h-1zM8 7h1v1h-1zM1 8h2v1h-2zM7 8h2v1h-2zM3 9h4v1h-4z" fill="#fff"/></svg>
<svg class="ab" style="left:654px;top:224px" width="10" height="10" shape-rendering="crispEdges"><path d="M3 0h4v1h-4zM1 1h2v1h-2zM7 1h1v1h-1zM1 2h1v1h-1zM0 3h1v1h-1zM0 4h1v1h-1zM0 5h1v1h-1zM0 6h1v1h-1zM1 7h1v1h-1z" fill="#1f2d45"/><path d="M3 1h4v1h-4zM2 2h6v1h-6zM1 3h7v1h-7zM1 4h7v1h-7zM1 5h7v1h-7zM1 6h7v1h-7zM2 7h6v1h-6zM3 8h4v1h-4z" fill="#fff"/><path d="M8 2h1v1h-1zM9 3h1v1h-1zM9 4h1v1h-1zM9 5h1v1h-1zM9 6h1v1h-1zM8 7h1v1h-1zM1 8h2v1h-2zM7 8h2v1h-2zM3 9h4v1h-4z" fill="#fff"/></svg>
<div class="f" style="left:672px;top:220px;width:99px;"><span style="left:2px;letter-spacing:-0.05px"></span></div>
<div class="cb" style="left:780px;top:223px"><svg width="13" height="13"><path d="M3 5.3 L5.1 9 L10.4 2.4" fill="none" stroke="#1a2740" stroke-width="2.4" stroke-linecap="butt" stroke-linejoin="miter"/></svg></div>
<div class="f" style="left:797px;top:220px;width:172px;"><span style="left:3px;letter-spacing:-0.05px">Účetní doklad</span></div>
<div class="cb" style="left:71px;top:242px"><svg width="13" height="13"><path d="M3 5.3 L5.1 9 L10.4 2.4" fill="none" stroke="#1a2740" stroke-width="2.4" stroke-linecap="butt" stroke-linejoin="miter"/></svg></div>
<div class="ab" style="left:88px;top:239px;width:17px;height:18px;border:1.5px solid #6a7d9a;border-radius:2px;background:#ebebeb;box-shadow:1px 1px 0 #fff"></div>
<div class="f" style="left:106px;top:239px;width:72px;"><span style="left:2px;letter-spacing:-0.4px">RZPBOLD</span></div>
<div class="f" style="left:178px;top:239px;width:72px;"><span style="left:2px;letter-spacing:-0.05px"></span></div>
<div class="f" style="left:250px;top:239px;width:72px;"><span style="left:2px;letter-spacing:-0.4px">VEKRHLAV</span></div>
<div class="f" style="left:322px;top:239px;width:72px;"><span style="left:2px;letter-spacing:-0.4px">TEKRHLAV</span></div>
<div class="cb" style="left:394px;top:242px"><svg width="13" height="13"><path d="M3 5.3 L5.1 9 L10.4 2.4" fill="none" stroke="#1a2740" stroke-width="2.4" stroke-linecap="butt" stroke-linejoin="miter"/></svg></div>
<div class="f" style="left:411px;top:239px;width:90px;"><span style="left:2px;letter-spacing:-0.4px">VEKRHLAV.ROZPIDNO</span></div>
<div class="f" style="left:501px;top:239px;width:36px;"><span style="left:2px;letter-spacing:-0.4px">024</span></div>
<div class="f" style="left:537px;top:239px;width:72px;"><span style="left:2px;letter-spacing:-0.05px"></span></div>
<svg class="ab" style="left:618px;top:243px" width="10" height="10" shape-rendering="crispEdges"><path d="M3 0h4v1h-4zM1 1h2v1h-2zM7 1h1v1h-1zM1 2h1v1h-1zM0 3h1v1h-1zM0 4h1v1h-1zM0 5h1v1h-1zM0 6h1v1h-1zM1 7h1v1h-1z" fill="#1f2d45"/><path d="M3 1h4v1h-4zM2 2h6v1h-6zM1 3h7v1h-7zM1 4h7v1h-7zM1 5h7v1h-7zM1 6h7v1h-7zM2 7h6v1h-6zM3 8h4v1h-4z" fill="#fff"/><path d="M8 2h1v1h-1zM9 3h1v1h-1zM9 4h1v1h-1zM9 5h1v1h-1zM9 6h1v1h-1zM8 7h1v1h-1zM1 8h2v1h-2zM7 8h2v1h-2zM3 9h4v1h-4z" fill="#fff"/></svg>
<svg class="ab" style="left:636px;top:243px" width="10" height="10" shape-rendering="crispEdges"><path d="M3 0h4v1h-4zM1 1h2v1h-2zM7 1h1v1h-1zM1 2h1v1h-1zM0 3h1v1h-1zM0 4h1v1h-1zM0 5h1v1h-1zM0 6h1v1h-1zM1 7h1v1h-1z" fill="#1f2d45"/><path d="M3 1h4v1h-4zM2 2h6v1h-6zM1 3h7v1h-7zM1 4h7v1h-7zM1 5h7v1h-7zM1 6h7v1h-7zM2 7h6v1h-6zM3 8h4v1h-4z" fill="#fff"/><path d="M8 2h1v1h-1zM9 3h1v1h-1zM9 4h1v1h-1zM9 5h1v1h-1zM9 6h1v1h-1zM8 7h1v1h-1zM1 8h2v1h-2zM7 8h2v1h-2zM3 9h4v1h-4z" fill="#fff"/></svg>
<svg class="ab" style="left:654px;top:243px" width="10" height="10" shape-rendering="crispEdges"><path d="M3 0h4v1h-4zM1 1h2v1h-2zM7 1h1v1h-1zM1 2h1v1h-1zM0 3h1v1h-1zM0 4h1v1h-1zM0 5h1v1h-1zM0 6h1v1h-1zM1 7h1v1h-1z" fill="#1f2d45"/><path d="M3 1h4v1h-4zM2 2h1v1h-1zM7 2h1v1h-1zM1 3h1v1h-1zM8 3h1v1h-1zM1 4h1v1h-1zM8 4h1v1h-1zM1 5h1v1h-1zM8 5h1v1h-1zM1 6h1v1h-1zM8 6h1v1h-1zM2 7h1v1h-1zM7 7h1v1h-1zM3 8h4v1h-4z" fill="#fff"/><path d="M3 2h4v1h-4zM2 3h6v1h-6zM2 4h6v1h-6zM2 5h6v1h-6zM2 6h6v1h-6zM3 7h4v1h-4z" fill="#22324a"/><path d="M8 2h1v1h-1zM9 3h1v1h-1zM9 4h1v1h-1zM9 5h1v1h-1zM9 6h1v1h-1zM8 7h1v1h-1zM1 8h2v1h-2zM7 8h2v1h-2zM3 9h4v1h-4z" fill="#fff"/></svg>
<div class="f" style="left:672px;top:239px;width:99px;"><span style="left:2px;letter-spacing:-0.05px"></span></div>
<div class="cb" style="left:780px;top:242px"><svg width="13" height="13"><path d="M3 5.3 L5.1 9 L10.4 2.4" fill="none" stroke="#1a2740" stroke-width="2.4" stroke-linecap="butt" stroke-linejoin="miter"/></svg></div>
<div class="f" style="left:797px;top:239px;width:172px;"><span style="left:3px;letter-spacing:-0.05px">Rozpočty a plány</span></div>
<div class="cb" style="left:71px;top:261px"></div>
<div class="ab" style="left:88px;top:258px;width:17px;height:18px;border:1.5px solid #6a7d9a;border-radius:2px;background:#ebebeb;box-shadow:1px 1px 0 #fff"></div>
<div class="f" style="left:106px;top:258px;width:72px;"><span style="left:2px;letter-spacing:-0.4px">RZPCERP</span></div>
<div class="f" style="left:178px;top:258px;width:72px;"><span style="left:2px;letter-spacing:-0.05px"></span></div>
<div class="f" style="left:250px;top:258px;width:72px;"><span style="left:2px;letter-spacing:-0.4px">NADRIZ</span></div>
<div class="f" style="left:322px;top:258px;width:72px;"><span style="left:2px;letter-spacing:-0.4px">TEKRHLAV</span></div>
<div class="cb" style="left:394px;top:261px"><svg width="13" height="13"><path d="M3 5.3 L5.1 9 L10.4 2.4" fill="none" stroke="#1a2740" stroke-width="2.4" stroke-linecap="butt" stroke-linejoin="miter"/></svg></div>
<div class="f" style="left:411px;top:258px;width:90px;"><span style="left:2px;letter-spacing:-0.4px">NADRIZ.ROZPIDNO</span></div>
<div class="f" style="left:501px;top:258px;width:36px;"><span style="left:2px;letter-spacing:-0.4px">024</span></div>
<div class="f" style="left:537px;top:258px;width:72px;"><span style="left:2px;letter-spacing:-0.05px"></span></div>
<svg class="ab" style="left:618px;top:262px" width="10" height="10" shape-rendering="crispEdges"><path d="M3 0h4v1h-4zM1 1h2v1h-2zM7 1h1v1h-1zM1 2h1v1h-1zM0 3h1v1h-1zM0 4h1v1h-1zM0 5h1v1h-1zM0 6h1v1h-1zM1 7h1v1h-1z" fill="#1f2d45"/><path d="M3 1h4v1h-4zM2 2h6v1h-6zM1 3h7v1h-7zM1 4h7v1h-7zM1 5h7v1h-7zM1 6h7v1h-7zM2 7h6v1h-6zM3 8h4v1h-4z" fill="#fff"/><path d="M8 2h1v1h-1zM9 3h1v1h-1zM9 4h1v1h-1zM9 5h1v1h-1zM9 6h1v1h-1zM8 7h1v1h-1zM1 8h2v1h-2zM7 8h2v1h-2zM3 9h4v1h-4z" fill="#fff"/></svg>
<svg class="ab" style="left:636px;top:262px" width="10" height="10" shape-rendering="crispEdges"><path d="M3 0h4v1h-4zM1 1h2v1h-2zM7 1h1v1h-1zM1 2h1v1h-1zM0 3h1v1h-1zM0 4h1v1h-1zM0 5h1v1h-1zM0 6h1v1h-1zM1 7h1v1h-1z" fill="#1f2d45"/><path d="M3 1h4v1h-4zM2 2h1v1h-1zM7 2h1v1h-1zM1 3h1v1h-1zM8 3h1v1h-1zM1 4h1v1h-1zM8 4h1v1h-1zM1 5h1v1h-1zM8 5h1v1h-1zM1 6h1v1h-1zM8 6h1v1h-1zM2 7h1v1h-1zM7 7h1v1h-1zM3 8h4v1h-4z" fill="#fff"/><path d="M3 2h4v1h-4zM2 3h6v1h-6zM2 4h6v1h-6zM2 5h6v1h-6zM2 6h6v1h-6zM3 7h4v1h-4z" fill="#22324a"/><path d="M8 2h1v1h-1zM9 3h1v1h-1zM9 4h1v1h-1zM9 5h1v1h-1zM9 6h1v1h-1zM8 7h1v1h-1zM1 8h2v1h-2zM7 8h2v1h-2zM3 9h4v1h-4z" fill="#fff"/></svg>
<svg class="ab" style="left:654px;top:262px" width="10" height="10" shape-rendering="crispEdges"><path d="M3 0h4v1h-4zM1 1h2v1h-2zM7 1h1v1h-1zM1 2h1v1h-1zM0 3h1v1h-1zM0 4h1v1h-1zM0 5h1v1h-1zM0 6h1v1h-1zM1 7h1v1h-1z" fill="#1f2d45"/><path d="M3 1h4v1h-4zM2 2h6v1h-6zM1 3h7v1h-7zM1 4h7v1h-7zM1 5h7v1h-7zM1 6h7v1h-7zM2 7h6v1h-6zM3 8h4v1h-4z" fill="#fff"/><path d="M8 2h1v1h-1zM9 3h1v1h-1zM9 4h1v1h-1zM9 5h1v1h-1zM9 6h1v1h-1zM8 7h1v1h-1zM1 8h2v1h-2zM7 8h2v1h-2zM3 9h4v1h-4z" fill="#fff"/></svg>
<div class="f" style="left:672px;top:258px;width:99px;"><span style="left:2px;letter-spacing:-0.05px"></span></div>
<div class="cb" style="left:780px;top:261px"><svg width="13" height="13"><path d="M3 5.3 L5.1 9 L10.4 2.4" fill="none" stroke="#1a2740" stroke-width="2.4" stroke-linecap="butt" stroke-linejoin="miter"/></svg></div>
<div class="f" style="left:797px;top:258px;width:172px;"><span style="left:3px;letter-spacing:-0.05px">Čerpání rozpočtu - nadřízený rozpočet</span></div>
<svg class="ab" style="left:974px;top:87px" width="15" height="15"><path d="M0.5 15 V7.5 A7 7 0 0 1 14.5 7.5 V15" fill="#d0d0d0" stroke="#8090a8"/><path d="M1.5 15 V7.5 A6 6 0 0 1 13.5 7.5" fill="none" stroke="#fff"/><line x1="1" y1="14.5" x2="14" y2="14.5" stroke="#5f7595"/><path d="M4 10 L7.5 6 L11 10 Z" fill="#5a6f90"/></svg><div class="ab" style="left:975px;top:102px;width:13px;height:80px;background:#d0d0d0;border-left:1px solid #fff;border-bottom:1px solid #5f7595"></div>
<svg class="ab" style="left:974px;top:262px" width="15" height="16"><path d="M0.5 0 V8.5 A7 7 0 0 0 14.5 8.5 V0" fill="#d0d0d0" stroke="#8090a8"/><path d="M1.5 1.5 H13.5 M1.5 1 V8.5" fill="none" stroke="#fff"/><path d="M4 5 L7.5 9 L11 5 Z" fill="#5a6f90"/></svg>
<div class="ab" style="left:984px;top:131px;width:2px;height:2px;background:#fff;box-shadow:1px 1px 0 #8a9ab0"></div>
<div class="ab" style="left:979px;top:135px;width:2px;height:2px;background:#fff;box-shadow:1px 1px 0 #8a9ab0"></div>
<div class="ab" style="left:984px;top:139px;width:2px;height:2px;background:#fff;box-shadow:1px 1px 0 #8a9ab0"></div>
<div class="ab" style="left:979px;top:143px;width:2px;height:2px;background:#fff;box-shadow:1px 1px 0 #8a9ab0"></div>
<div class="ab" style="left:984px;top:147px;width:2px;height:2px;background:#fff;box-shadow:1px 1px 0 #8a9ab0"></div>
<div class="ab" style="left:67px;top:309px;width:926px;height:310px;border-top:1px solid #fff;border-left:1px solid #fff;border-right:1px solid #5f7595;border-bottom:1px solid #5f7595;background:#cfcfcf"></div>
<div class="ab" style="left:70px;top:312px;width:921px;height:305px;background:#d9d9d9;box-shadow:inset -1px -1px 0 #c8c8c8"></div>
<div class="ab" style="left:67px;top:287px;width:113px;height:25px;background:#cfcfcf;border-top:1px solid #fff;border-left:1px solid #fff;border-top-left-radius:4px;border-top-right-radius:2px"></div>
<div class="ab" style="left:179px;top:289px;width:1px;height:19px;background:#5f7595"></div>
<div class="ab" style="left:68px;top:309px;width:111px;height:3px;background:#cfcfcf"></div>
<div class="t" style="left:67px;width:113px;text-align:center;top:293px;font-size:12px;line-height:14px">Podmínky</div>
<div class="ab" style="left:183px;top:287px;width:110px;height:22px;background:#94a3b8;border-top-left-radius:3px;border-top-right-radius:3px"></div>
<div class="t" style="left:183px;width:110px;text-align:center;top:293px;font-size:12px;line-height:14px">Související přílohy</div>
<div class="t b" style="left:79px;top:318px;letter-spacing:0.2px">Aktualizace hlaviček</div>
<div class="f" style="left:79px;top:335px;width:368px;"><span style="left:2px;letter-spacing:-0.4px">'A'</span></div>
<div class="t b" style="left:79px;top:359px;letter-spacing:0.05px">Tlačítko CMDADD - vložení</div>
<div class="f" style="left:79px;top:376px;width:368px;"><span style="left:2px;letter-spacing:-0.4px">'A'</span></div>
<div class="t b" style="left:79px;top:399px;letter-spacing:0.1px">Tlačítko CMDADD - změna</div>
<div class="f" style="left:79px;top:416px;width:368px;"><span style="left:2px;letter-spacing:-0.4px">'A'</span></div>
<div class="t b" style="left:79px;top:440px;letter-spacing:0px">Tlačítko CMDSHOW</div>
<div class="f" style="left:79px;top:457px;width:368px;"><span style="left:2px;letter-spacing:-0.4px">'A'</span></div>
<div class="t b" style="left:79px;top:480px;letter-spacing:0px">Tlačítko CMDCOPY</div>
<div class="f" style="left:79px;top:497px;width:368px;"><span style="left:2px;letter-spacing:-0.4px">'A'</span></div>
<div class="t b" style="left:79px;top:521px;letter-spacing:-0.05px">Tlačítko CMDDEL</div>
<div class="f" style="left:79px;top:538px;width:368px;"><span style="left:2px;letter-spacing:-0.4px">'A'</span></div>
<div class="t b" style="left:79px;top:561px;letter-spacing:0.2px">Kontrola při stisku tlačítka</div>
<div class="f" style="left:79px;top:578px;width:368px;"><span style="left:2px;letter-spacing:-0.4px">'A'</span></div>
<div class="ab" style="left:492px;top:337px;width:486px;height:156px;border:1px solid #93a3b9;border-radius:4px"></div>
<div class="ab" style="left:510px;top:332px;width:132px;height:10px;background:#d9d9d9"></div>
<div class="t b" style="left:519px;top:332px;letter-spacing:0.5px">Proměnné podmínek</div>
<div class="t b" style="left:501px;top:352px">Proměnná</div>
<div class="t b" style="left:726px;top:352px">Položka</div>
<div class="f" style="left:501px;top:369px;width:225px;background:#bfe0ff"><span style="left:2px;letter-spacing:-0.05px"></span></div>
<div class="f" style="left:726px;top:369px;width:225px;background:#bfe0ff"><span style="left:2px;letter-spacing:-0.05px"></span></div>
<div class="f" style="left:501px;top:388px;width:225px;"><span style="left:2px;letter-spacing:-0.05px"></span></div>
<div class="f" style="left:726px;top:388px;width:225px;"><span style="left:2px;letter-spacing:-0.05px"></span></div>
<div class="f" style="left:501px;top:407px;width:225px;"><span style="left:2px;letter-spacing:-0.05px"></span></div>
<div class="f" style="left:726px;top:407px;width:225px;"><span style="left:2px;letter-spacing:-0.05px"></span></div>
<div class="f" style="left:501px;top:426px;width:225px;"><span style="left:2px;letter-spacing:-0.05px"></span></div>
<div class="f" style="left:726px;top:426px;width:225px;"><span style="left:2px;letter-spacing:-0.05px"></span></div>
<div class="f" style="left:501px;top:445px;width:225px;"><span style="left:2px;letter-spacing:-0.05px"></span></div>
<div class="f" style="left:726px;top:445px;width:225px;"><span style="left:2px;letter-spacing:-0.05px"></span></div>
<div class="f" style="left:501px;top:464px;width:225px;"><span style="left:2px;letter-spacing:-0.05px"></span></div>
<div class="f" style="left:726px;top:464px;width:225px;"><span style="left:2px;letter-spacing:-0.05px"></span></div>
<svg class="ab" style="left:956px;top:369px" width="15" height="15"><path d="M0.5 15 V7.5 A7 7 0 0 1 14.5 7.5 V15" fill="#d0d0d0" stroke="#8090a8"/><path d="M1.5 15 V7.5 A6 6 0 0 1 13.5 7.5" fill="none" stroke="#fff"/><line x1="1" y1="14.5" x2="14" y2="14.5" stroke="#5f7595"/><path d="M4 10 L7.5 6 L11 10 Z" fill="#5a6f90"/></svg><div class="ab" style="left:957px;top:384px;width:13px;height:84px;background:#d0d0d0;border-left:1px solid #fff;border-bottom:1px solid #5f7595"></div>
<svg class="ab" style="left:956px;top:467px" width="15" height="16"><path d="M0.5 0 V8.5 A7 7 0 0 0 14.5 8.5 V0" fill="#d0d0d0" stroke="#8090a8"/><path d="M1.5 1.5 H13.5 M1.5 1 V8.5" fill="none" stroke="#fff"/><path d="M4 5 L7.5 9 L11 5 Z" fill="#5a6f90"/></svg>
<div class="ab" style="left:966px;top:415px;width:2px;height:2px;background:#fff;box-shadow:1px 1px 0 #8a9ab0"></div>
<div class="ab" style="left:961px;top:419px;width:2px;height:2px;background:#fff;box-shadow:1px 1px 0 #8a9ab0"></div>
<div class="ab" style="left:966px;top:423px;width:2px;height:2px;background:#fff;box-shadow:1px 1px 0 #8a9ab0"></div>
<div class="ab" style="left:961px;top:427px;width:2px;height:2px;background:#fff;box-shadow:1px 1px 0 #8a9ab0"></div>
<div class="ab" style="left:966px;top:431px;width:2px;height:2px;background:#fff;box-shadow:1px 1px 0 #8a9ab0"></div>
<div class="t b" style="left:492px;top:524px">Max. velikost příloh v Bytech</div>
<div class="f" style="left:492px;top:541px;width:180px;"><span style="left:2px;letter-spacing:-0.05px"></span></div>
<svg class="ab" style="left:3px;top:31px" width="11" height="11" shape-rendering="crispEdges"><path d="M3 0h5v1h-5zM1 1h2v1h-2zM1 2h1v1h-1zM0 3h1v1h-1zM0 4h1v1h-1zM0 5h1v1h-1zM0 6h1v1h-1zM0 7h1v1h-1z" fill="#1f2d45"/><path d="M8 1h1v1h-1zM9 2h1v1h-1zM10 3h1v1h-1zM10 4h1v1h-1zM10 5h1v1h-1zM10 6h1v1h-1zM10 7h1v1h-1zM1 8h1v1h-1zM9 8h1v1h-1zM2 9h2v1h-2zM7 9h2v1h-2zM3 10h5v1h-5z" fill="#fff"/><path d="M3 2h4v1h-4zM2 3h6v1h-6zM2 4h6v1h-6zM2 5h6v1h-6zM2 6h6v1h-6zM3 7h4v1h-4z" fill="#8d9db3"/></svg>
</body></html>
